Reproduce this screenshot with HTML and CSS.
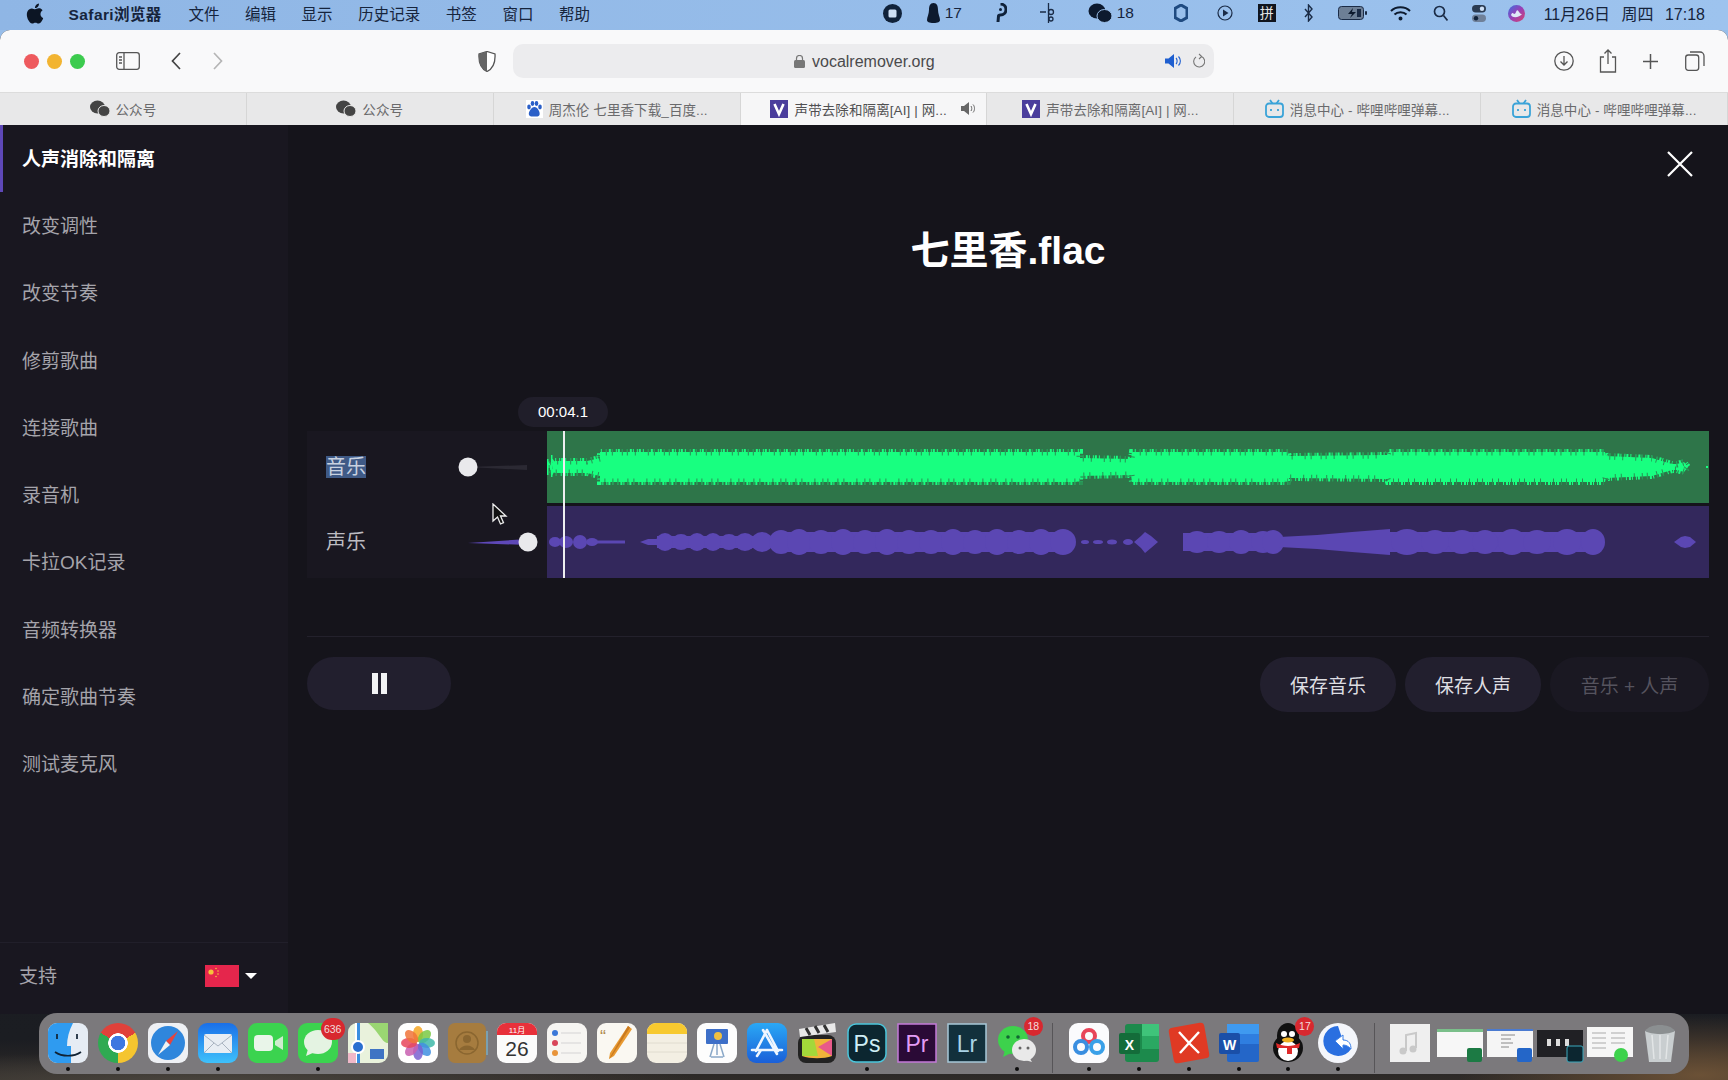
FILE: index.html
```html
<!DOCTYPE html>
<html lang="zh-CN">
<head>
<meta charset="utf-8">
<title>声带去除和隔离[AI] | 网上</title>
<link rel="stylesheet" href="styles.css">
</head>
<body>
<div class="screen">
  <header class="menubar">
    <nav class="menu">
      <svg class="apple" viewBox="0 0 24 24"><path d="M12.152 6.896c-.948 0-2.415-1.078-3.96-1.04-2.04.027-3.91 1.183-4.961 3.014-2.117 3.675-.546 9.103 1.519 12.09 1.013 1.454 2.208 3.09 3.792 3.039 1.52-.065 2.09-.987 3.935-.987 1.831 0 2.35.987 3.96.948 1.637-.026 2.676-1.48 3.676-2.948 1.156-1.688 1.636-3.325 1.662-3.415-.039-.013-3.182-1.221-3.22-4.857-.026-3.04 2.48-4.494 2.597-4.559-1.429-2.09-3.623-2.324-4.39-2.376-2-.156-3.675 1.09-4.61 1.09zM15.53 3.83c.843-1.012 1.4-2.427 1.245-3.83-1.207.052-2.662.805-3.532 1.818-.78.896-1.454 2.338-1.273 3.714 1.338.104 2.715-.688 3.559-1.701"/></svg>
      <b class="app-name">Safari浏览器</b>
      <span>文件</span><span>编辑</span><span>显示</span><span>历史记录</span><span>书签</span><span>窗口</span><span>帮助</span>
    </nav>
    <div class="status">
      <svg width="19" height="19" viewBox="0 0 19 19"><circle cx="9.5" cy="9.5" r="9.5" fill="#10223a"/><rect x="5.5" y="5.5" width="8" height="8" rx="1.5" fill="#cfe0f5"/></svg>
      <span class="st-pair"><svg width="13" height="20" viewBox="0 0 13 20"><path d="M6.5 0C10 0 11 3 11 7c0 4 2 7 2 10 0 2-2 3-6.5 3S0 19 0 17c0-3 2-6 2-10 0-4 1-7 4.5-7z" fill="#0d1a2e"/></svg><span>17</span></span>
      <svg width="13" height="20" viewBox="0 0 13 20"><path d="M6.5 1a5.5 5.5 0 0 1 0 11c-1 0-2 0-2 1l-.5 6" fill="none" stroke="#10223a" stroke-width="3"/><circle cx="6.5" cy="6.5" r="1.5" fill="#10223a"/></svg>
      <svg width="17" height="20" viewBox="0 0 17 20" fill="none" stroke="#1a2b46" stroke-width="1.3"><path d="M8.5 0v20M0 9h6"/><circle cx="11" cy="9" r="2.5"/><circle cx="11" cy="16" r="2"/></svg>
      <span class="st-pair"><svg width="24" height="20" viewBox="0 0 24 20" fill="#0d1a2e"><ellipse cx="9" cy="8" rx="8.5" ry="7.5"/><ellipse cx="16.5" cy="13" rx="7.5" ry="6.5" stroke="#9cc0ea"/></svg><span>18</span></span>
      <svg width="14" height="18" viewBox="0 0 14 18"><path d="M7 1l6 3.5v9L7 17l-6-3.5v-9z" fill="none" stroke="#1f4a80" stroke-width="3"/></svg>
      <svg width="16" height="16" viewBox="0 0 16 16"><circle cx="8" cy="8" r="7" fill="none" stroke="#1a2b46" stroke-width="1.2"/><path d="M6 4.5l5.5 3.5L6 11.5z" fill="#1a2b46"/></svg>
      <span class="pin">拼</span>
      <svg width="9" height="18" viewBox="0 0 9 18"><path d="M1 5l7 8-3.5 4V1L8 5l-7 8" fill="none" stroke="#1a2b46" stroke-width="1.4"/></svg>
      <svg width="30" height="14" viewBox="0 0 30 14"><rect x=".5" y=".5" width="25" height="13" rx="3" fill="#6d7f96" stroke="#1a2b46"/><path d="M15 2l-5 6h4l-2 4 6-6h-4z" fill="#0d1a2e"/><rect x="19" y="3" width="4" height="8" fill="#1a2b46"/><rect x="27" y="5" width="2" height="4" rx="1" fill="#1a2b46"/></svg>
      <svg width="21" height="15" viewBox="0 0 21 15" fill="none" stroke="#0d1a2e" stroke-width="2"><path d="M1 5c5-5 14-5 19 0M4.5 8.5c3-3 9-3 12 0"/><circle cx="10.5" cy="12.5" r="1" fill="#0d1a2e"/></svg>
      <svg width="15" height="16" viewBox="0 0 15 16" fill="none" stroke="#1a2b46" stroke-width="1.7"><circle cx="6.5" cy="6.5" r="5"/><path d="M10.5 10.5l4 5"/></svg>
      <svg width="14" height="17" viewBox="0 0 14 17"><rect width="14" height="7.5" rx="3.7" fill="#2b3b52"/><circle cx="10" cy="3.7" r="2.2" fill="#cfe0f5"/><rect y="9.5" width="14" height="7.5" rx="3.7" fill="#6f8099"/><circle cx="4" cy="13.2" r="2.2" fill="#10223a"/></svg>
      <svg width="17" height="17" viewBox="0 0 17 17"><defs><linearGradient id="siri" x1="0" y1="0" x2="1" y2="1"><stop offset="0" stop-color="#3b6fe0"/><stop offset=".5" stop-color="#9a3fb5"/><stop offset="1" stop-color="#d8446a"/></linearGradient></defs><circle cx="8.5" cy="8.5" r="8.5" fill="url(#siri)"/><path d="M3 10c2-5 3 2 5-3s3 3 6 2c-2 3-9 5-11 1z" fill="#dfe7f7"/></svg>
      <span class="clock">11月26日 周四 17:18</span>
    </div>
  </header>

  <div class="window">
    <div class="toolbar">
      <div class="traffic"><i class="red"></i><i class="amber"></i><i class="green"></i></div>
      <svg class="tb-sidebar" width="24" height="18" viewBox="0 0 24 18" fill="none" stroke="#555" stroke-width="1.3"><rect x=".7" y=".7" width="22.6" height="16.6" rx="2.5"/><path d="M8 1v16M3 5h3M3 8h3M3 11h3"/></svg>
      <svg class="tb-back" width="10" height="18" viewBox="0 0 10 18" fill="none" stroke="#444" stroke-width="1.7"><path d="M9 1L1.5 9 9 17"/></svg>
      <svg class="tb-forward" width="10" height="18" viewBox="0 0 10 18" fill="none" stroke="#b5b5b5" stroke-width="1.7"><path d="M1 1l7.5 8L1 17"/></svg>
      <svg class="tb-shield" width="18" height="21" viewBox="0 0 18 21"><path d="M9 .5l8 2.5c.5 8-1 14-8 17.5C2 17 .5 11 1 3z" fill="#fff" stroke="#555" stroke-width="1.3"/><path d="M9 .5L1 3c-.5 8 1 14 8 17.5z" fill="#666"/></svg>
      <div class="address">
        <svg width="11" height="13" viewBox="0 0 11 13"><rect y="5" width="11" height="8" rx="1.5" fill="#777"/><path d="M2.5 5V3.5a3 3 0 0 1 6 0V5" fill="none" stroke="#777" stroke-width="1.2"/></svg>
        <span class="url">vocalremover.org</span>
        <svg class="addr-speaker" width="17" height="14" viewBox="0 0 17 14"><path d="M0 4.5h3.5L9 0v14L3.5 9.5H0z" fill="#1f5fd0"/><path d="M11 4c1.5 1.5 1.5 4.5 0 6M13.5 2.5c2.5 2.5 2.5 6.5 0 9" fill="none" stroke="#1f5fd0" stroke-width="1.1"/></svg>
        <svg class="addr-reload" width="13" height="16" viewBox="0 0 13 16" fill="none" stroke="#777" stroke-width="1.1"><path d="M9.5 3.5A5.5 5.5 0 1 1 4 4M7 1l2.7 2.5L7 6"/></svg>
      </div>
      <div class="tb-right">
        <svg width="20" height="20" viewBox="0 0 20 20" fill="none" stroke="#555" stroke-width="1.3"><circle cx="10" cy="10" r="9.2"/><path d="M10 5v9M6.5 10.5L10 14l3.5-3.5"/></svg>
        <svg width="18" height="24" viewBox="0 0 18 24" fill="none" stroke="#555" stroke-width="1.3"><path d="M5 8H1.5v15h15V8H13M9 15V1M5.5 4.5L9 1l3.5 3.5"/></svg>
        <svg width="15" height="15" viewBox="0 0 15 15" fill="none" stroke="#555" stroke-width="1.5"><path d="M7.5 0v15M0 7.5h15"/></svg>
        <svg width="20" height="20" viewBox="0 0 20 20" fill="none" stroke="#555" stroke-width="1.3"><rect x=".7" y="4" width="13" height="15.3" rx="2.5"/><path d="M5 1h10a4 4 0 0 1 4 4v10"/></svg>
      </div>
    </div>

    <div class="tabs">
      <div class="tab"><svg class="fav" width="20" height="17" viewBox="0 0 20 17" fill="#444"><ellipse cx="7.5" cy="7" rx="7.5" ry="6.5"/><ellipse cx="14" cy="11" rx="6" ry="5.5" stroke="#e8e8e8"/></svg><span>公众号</span></div>
      <div class="tab"><svg class="fav" width="20" height="17" viewBox="0 0 20 17" fill="#444"><ellipse cx="7.5" cy="7" rx="7.5" ry="6.5"/><ellipse cx="14" cy="11" rx="6" ry="5.5" stroke="#e8e8e8"/></svg><span>公众号</span></div>
      <div class="tab"><svg class="fav" width="17" height="18" viewBox="0 0 17 18"><rect width="17" height="18" fill="#fff"/><g fill="#2a5fc8"><ellipse cx="3" cy="7" rx="1.8" ry="2.4"/><ellipse cx="6.5" cy="3.5" rx="1.8" ry="2.4"/><ellipse cx="10.5" cy="3.5" rx="1.8" ry="2.4"/><ellipse cx="14" cy="7" rx="1.8" ry="2.4"/><path d="M8.5 7c3 0 6 5 5 8-1 2-3 1.5-5 1.5S4 17 3 15C2 12 5.5 7 8.5 7z"/></g></svg><span>周杰伦 七里香下载_百度...</span></div>
      <div class="tab active"><svg class="fav" width="18" height="18" viewBox="0 0 18 18"><rect width="18" height="18" fill="#4a3d9c"/><path d="M4.5 4L9 14l4.5-10" fill="none" stroke="#fff" stroke-width="2.6"/></svg><span>声带去除和隔离[AI] | 网...</span><svg class="tab-speaker" width="15" height="13" viewBox="0 0 15 13"><path d="M0 4h3l5-4v13l-5-4H0z" fill="#666"/><path d="M10 4c1 1.5 1 3.5 0 5M12 2.5c2 2 2 6 0 8" fill="none" stroke="#666"/></svg></div>
      <div class="tab"><svg class="fav" width="18" height="18" viewBox="0 0 18 18"><rect width="18" height="18" fill="#4a3d9c"/><path d="M4.5 4L9 14l4.5-10" fill="none" stroke="#fff" stroke-width="2.6"/></svg><span>声带去除和隔离[AI] | 网...</span></div>
      <div class="tab"><svg class="fav" width="19" height="19" viewBox="0 0 19 19" fill="none" stroke="#3aa3d8" stroke-width="1.8"><rect x="1" y="4.5" width="17" height="13.5" rx="3"/><path d="M5 1l2.5 3.5M14 1l-2.5 3.5M6 10v2M13 10v2"/></svg><span>消息中心 - 哔哩哔哩弹幕...</span></div>
      <div class="tab"><svg class="fav" width="19" height="19" viewBox="0 0 19 19" fill="none" stroke="#3aa3d8" stroke-width="1.8"><rect x="1" y="4.5" width="17" height="13.5" rx="3"/><path d="M5 1l2.5 3.5M14 1l-2.5 3.5M6 10v2M13 10v2"/></svg><span>消息中心 - 哔哩哔哩弹幕...</span></div>
    </div>

    <div class="app">
      <aside class="sidebar">
        <ul class="side-list">
          <li class="current">人声消除和隔离</li>
          <li>改变调性</li>
          <li>改变节奏</li>
          <li>修剪歌曲</li>
          <li>连接歌曲</li>
          <li>录音机</li>
          <li>卡拉OK记录</li>
          <li>音频转换器</li>
          <li>确定歌曲节奏</li>
          <li>测试麦克风</li>
        </ul>
        <div class="side-foot">
          <span>支持</span>
          <span class="lang">
            <svg width="34" height="22" viewBox="0 0 34 22"><rect width="34" height="22" fill="#e5264c"/><circle cx="6" cy="7" r="2.6" fill="#f5c33b"/><g fill="#f5c33b"><circle cx="11" cy="3.5" r=".8"/><circle cx="13" cy="6" r=".8"/><circle cx="13" cy="9" r=".8"/><circle cx="11" cy="11.5" r=".8"/></g></svg>
            <i class="caret"></i>
          </span>
        </div>
      </aside>

      <main class="editor">
        <svg class="close" width="26" height="26" viewBox="0 0 26 26" fill="none" stroke="#fff" stroke-width="2.2"><path d="M1 1l24 24M25 1L1 25"/></svg>
        <h1 class="title">七里香.flac</h1>

        <section class="mixer">
          <div class="channels">
            <div class="channel">
              <span class="ch-name selected">音乐</span>
              <svg class="slider" width="80" height="20" viewBox="0 0 80 20"><path d="M10 10l59-2v5z" fill="#2b2933"/><circle cx="10" cy="10" r="9.5" fill="#e9e9ec"/></svg>
            </div>
            <div class="channel">
              <span class="ch-name">声乐</span>
              <svg class="slider" width="80" height="20" viewBox="0 0 80 20"><path d="M10 11l60-4v6z" fill="#5e48b8"/><circle cx="70" cy="10" r="9.5" fill="#e9e9ec"/></svg>
            </div>
            <svg class="cursor" width="16" height="23" viewBox="0 0 16 23"><path d="M1 1v17l4.5-4 3 7 3-1.3-3-6.7H14z" fill="#111" stroke="#eee" stroke-width="1.3"/></svg>
          </div>
          <div class="waves">
            <div class="wave wave-music">
              <svg viewBox="0 0 1162 72">
                <defs><path id="music-env" d="M3 33L8 30L40 30L53 27L53 21L533 21L533 27L584 28L585 21L741 21L742 25L840 24L841 21L1058 21L1059 25L1105 27L1125 33L1130 33L1137 31L1141 36L1137 41L1130 39L1125 39L1105 45L1059 47L1058 51L841 51L840 48L742 47L741 51L585 51L584 44L533 45L533 51L53 51L53 45L40 42L8 42L3 39Z"/></defs>
                <use href="#music-env" class="wm-teeth"/>
                <use href="#music-env" class="wm-body"/>
                <use href="#music-env" class="wm-notch"/>
                <rect class="wm-spike" x="0" y="28" width="1.5" height="16"/>
                <rect class="wm-spike" x="4" y="24" width="1.5" height="22"/>
                <rect class="wm-spike" x="1159" y="35" width="2" height="2"/>
              </svg>
            </div>
            <div class="wave wave-voice">
              <svg viewBox="0 0 1162 72">
                <g class="wv-fill">
                  <ellipse cx="8" cy="36" rx="6" ry="5"/><ellipse cx="19" cy="36" rx="7" ry="6"/><ellipse cx="33" cy="36" rx="7" ry="7"/><ellipse cx="45" cy="36" rx="6" ry="4"/><path d="M50 34.5h28v3H50z"/>
                  <path d="M93 36l8-3h9v6h-9z"/>
                  <rect x="110" y="30" width="100" height="12"/>
                  <ellipse cx="118" cy="36" rx="9" ry="9"/><ellipse cx="134" cy="36" rx="9" ry="8"/><ellipse cx="150" cy="36" rx="9" ry="9"/><ellipse cx="166" cy="36" rx="9" ry="9"/><ellipse cx="182" cy="36" rx="9" ry="8"/><ellipse cx="198" cy="36" rx="10" ry="9"/>
                  <ellipse cx="215" cy="36" rx="11" ry="10"/><ellipse cx="234" cy="36" rx="12" ry="12"/>
                  <rect x="240" y="26" width="282" height="20"/>
                  <ellipse cx="252" cy="36" rx="12" ry="13"/><ellipse cx="274" cy="36" rx="12" ry="12"/><ellipse cx="296" cy="36" rx="12" ry="13"/><ellipse cx="318" cy="36" rx="12" ry="12"/><ellipse cx="340" cy="36" rx="12" ry="13"/><ellipse cx="362" cy="36" rx="12" ry="12"/><ellipse cx="384" cy="36" rx="12" ry="12"/><ellipse cx="406" cy="36" rx="12" ry="13"/><ellipse cx="428" cy="36" rx="12" ry="12"/><ellipse cx="450" cy="36" rx="12" ry="13"/><ellipse cx="472" cy="36" rx="12" ry="12"/><ellipse cx="494" cy="36" rx="12" ry="13"/><ellipse cx="516" cy="36" rx="13" ry="13"/>
                  <ellipse cx="538" cy="36" rx="4" ry="2"/><ellipse cx="551" cy="36" rx="5" ry="2"/><ellipse cx="565" cy="36" rx="5" ry="2.5"/><ellipse cx="581" cy="36" rx="5" ry="3"/>
                  <path d="M587 36L594 30L598 26L604 30L611 36L604 42L598 47L594 42Z"/>
                  <rect x="636" y="27" width="90" height="18"/>
                  <ellipse cx="650" cy="36" rx="12" ry="11"/><ellipse cx="672" cy="36" rx="12" ry="11"/><ellipse cx="694" cy="36" rx="12" ry="12"/><ellipse cx="716" cy="36" rx="12" ry="11"/><ellipse cx="726" cy="36" rx="11" ry="12"/>
                  <path d="M732 31L770 29L805 26L843 23V49L805 46L770 43L732 41Z"/>
                  <rect x="843" y="26" width="205" height="20"/>
                  <ellipse cx="860" cy="36" rx="16" ry="13"/><ellipse cx="888" cy="36" rx="14" ry="12"/><ellipse cx="915" cy="36" rx="14" ry="12"/><ellipse cx="938" cy="36" rx="13" ry="12"/><ellipse cx="965" cy="36" rx="14" ry="13"/><ellipse cx="990" cy="36" rx="14" ry="12"/><ellipse cx="1020" cy="36" rx="14" ry="13"/><ellipse cx="1046" cy="36" rx="12" ry="13"/>
                  <path d="M1127 36L1134 31L1138 30L1143 31L1149 36L1143 41L1138 42L1134 41Z"/>
                </g>
              </svg>
            </div>
            <i class="playhead"></i>
            <span class="timecode">00:04.1</span>
          </div>
        </section>

        <hr class="rule">

        <div class="actions">
          <button class="btn play" aria-label="暂停"><i></i><i></i></button>
          <div class="saves">
            <button class="btn">保存音乐</button>
            <button class="btn">保存人声</button>
            <button class="btn off">音乐 + 人声</button>
          </div>
        </div>
      </main>
    </div>
  </div>

  <footer class="dock">
    <div class="di run"><svg viewBox="0 0 40 40"><rect width="40" height="40" rx="9" fill="#e6ecf4"/><path d="M9 0h16c-4 8-6 15-6 23h4v17H9a9 9 0 0 1-9-9V9a9 9 0 0 1 9-9z" fill="#2f9bf0"/><path d="M9 11v5M29 11v5M7 29c7 5 19 5 26 0" fill="none" stroke="#123" stroke-width="1.7"/></svg></div>
    <div class="di run"><span class="chrome"></span></div>
    <div class="di run"><svg viewBox="0 0 40 40"><rect width="40" height="40" rx="9" fill="#eef0f4"/><circle cx="20" cy="20" r="17" fill="#2f86dc"/><path d="M30 8L22 22 18 18z" fill="#e8433c"/><path d="M10 32l8-14 4 4z" fill="#f2f2f2"/></svg></div>
    <div class="di run"><svg viewBox="0 0 40 40"><defs><linearGradient id="mail" x1="0" y1="0" x2="0" y2="1"><stop offset="0" stop-color="#1a6fe8"/><stop offset="1" stop-color="#3fc1fb"/></linearGradient></defs><rect width="40" height="40" rx="9" fill="url(#mail)"/><rect x="6" y="11" width="28" height="19" rx="2" fill="#e8edf3"/><path d="M6 12l14 11 14-11M6 30l10-10M34 30L24 20" fill="none" stroke="#a9b3c0"/></svg></div>
    <div class="di"><svg viewBox="0 0 40 40"><rect width="40" height="40" rx="9" fill="#3bd34f"/><rect x="6" y="12" width="19" height="16" rx="4" fill="#e9f5e9"/><path d="M27 18l8-5v14l-8-5z" fill="#cfeccf"/></svg></div>
    <div class="di run"><svg viewBox="0 0 40 40"><rect width="40" height="40" rx="9" fill="#3bd34f"/><ellipse cx="20" cy="19" rx="14" ry="12" fill="#e4f3e2"/><path d="M10 26l-2 7 9-4z" fill="#e4f3e2"/></svg><b class="badge wide">636</b></div>
    <div class="di"><svg viewBox="0 0 40 40"><rect width="40" height="40" rx="9" fill="#e9f2dc"/><path d="M20 0h20v20c-6 0-8-10-20-20z" fill="#9ad672"/><rect x="7" y="0" width="5" height="40" fill="#fff"/><path d="M9 0h3v40H9z" fill="#3a8ee0"/><circle cx="10" cy="24" r="6" fill="#2a6fd0" stroke="#fff" stroke-width="2"/><path d="M22 26h14v10H22z" fill="#3f74c4"/><path d="M0 30h8v10H0z" fill="#f0b8c8"/></svg></div>
    <div class="di"><svg viewBox="0 0 40 40"><rect width="40" height="40" rx="9" fill="#fff"/><g transform="translate(20 20)"><ellipse cy="-9" rx="5" ry="8" fill="#f5a623" opacity=".85"/><ellipse cy="-9" rx="5" ry="8" fill="#7ac943" opacity=".85" transform="rotate(45)"/><ellipse cy="-9" rx="5" ry="8" fill="#3fb8a8" opacity=".85" transform="rotate(90)"/><ellipse cy="-9" rx="5" ry="8" fill="#3f8fe0" opacity=".85" transform="rotate(135)"/><ellipse cy="-9" rx="5" ry="8" fill="#7a5fd0" opacity=".85" transform="rotate(180)"/><ellipse cy="-9" rx="5" ry="8" fill="#c85fb0" opacity=".85" transform="rotate(225)"/><ellipse cy="-9" rx="5" ry="8" fill="#e8455a" opacity=".85" transform="rotate(270)"/><ellipse cy="-9" rx="5" ry="8" fill="#f0743a" opacity=".85" transform="rotate(315)"/></g></svg></div>
    <div class="di"><svg viewBox="0 0 40 40"><rect width="38" height="40" rx="7" fill="#a67c3f"/><circle cx="19" cy="20" r="11" fill="none" stroke="#8a6630" stroke-width="1.5"/><circle cx="19" cy="16" r="4" fill="#8a6630"/><path d="M11 27c3-6 13-6 16 0" fill="#8a6630"/><rect x="38" y="8" width="2" height="24" fill="#7aa0b0"/></svg></div>
    <div class="di"><svg viewBox="0 0 40 40"><rect width="40" height="40" rx="9" fill="#fbfbfb"/><path d="M0 12V9a9 9 0 0 1 9-9h22a9 9 0 0 1 9 9v3z" fill="#e8303a"/><text class="ic-cal-m" x="20" y="9.5">11月</text><text class="ic-cal-d" x="20" y="33">26</text></svg></div>
    <div class="di"><svg viewBox="0 0 40 40"><rect width="40" height="40" rx="9" fill="#f6f5f2"/><circle cx="8" cy="10" r="3" fill="#3a78d8"/><circle cx="8" cy="20" r="3" fill="#d8455a"/><circle cx="8" cy="30" r="3" fill="#e8943a"/><path d="M14 10h20M14 20h20M14 30h20" stroke="#d4d4d4" stroke-width="1.2"/></svg></div>
    <div class="di"><svg viewBox="0 0 40 40"><rect width="40" height="40" rx="9" fill="#faf8f2"/><path d="M31 3l4 3-18 27-5 3 1-6z" fill="#e89a32"/><path d="M31 3l2 1.5L15 33l-3 3z" fill="#c97a20"/><text class="ic-quote" x="3" y="20">“</text></svg></div>
    <div class="di"><svg viewBox="0 0 40 40"><rect width="40" height="40" rx="9" fill="#f3efe3"/><path d="M0 11V9a9 9 0 0 1 9-9h22a9 9 0 0 1 9 9v2z" fill="#f7c92f"/><path d="M0 20h40M0 29h40" stroke="#e0dccf"/></svg></div>
    <div class="di"><svg viewBox="0 0 40 40"><rect width="40" height="40" rx="9" fill="#fdfdfd"/><rect x="9" y="6" width="22" height="15" rx="1" fill="#3d6fc8"/><circle cx="21" cy="13" r="4" fill="#f0c040"/><path d="M20 21v11M14 34h12M17 21l-4 13M23 21l4 13" stroke="#8aa8c8" stroke-width="1.5" fill="none"/></svg></div>
    <div class="di"><svg viewBox="0 0 40 40"><defs><linearGradient id="store" x1="0" y1="0" x2="0" y2="1"><stop offset="0" stop-color="#2aa8f5"/><stop offset="1" stop-color="#1a5fd8"/></linearGradient></defs><rect width="40" height="40" rx="9" fill="url(#store)"/><path d="M20 7L9 28M20 7l11 21M16 7l14 24M5 27h30M10 33l4-6" stroke="#eef6ff" stroke-width="2.6" stroke-linecap="round" fill="none"/></svg></div>
    <div class="di"><svg viewBox="0 0 40 40"><rect x="1" y="12" width="38" height="28" rx="8" fill="#222"/><path d="M2 6l36-6 1 9-36 5z" fill="#e8e8e8"/><path d="M9 5l4 7M18 3l4 7M27 2l4 7" stroke="#333" stroke-width="3"/><path d="M5 16h30v17c-8 3-22 3-30 0z" fill="#f0b43a"/><path d="M5 16h12l4 17H5z" fill="#a3d83a"/><path d="M21 24l14-8v17z" fill="#e85a8a"/></svg></div>
    <div class="di run"><svg viewBox="0 0 40 40"><rect x="1" y="1" width="38" height="38" rx="8" fill="#0c2630" stroke="#4ac6dc" stroke-width="1.5"/><text class="ic-adobe ps" x="20" y="29">Ps</text></svg></div>
    <div class="di"><svg viewBox="0 0 40 40"><rect x="1" y="1" width="38" height="38" fill="#2a0a36" stroke="#c47ad8" stroke-width="1.5"/><text class="ic-adobe pr" x="20" y="29">Pr</text></svg></div>
    <div class="di"><svg viewBox="0 0 40 40"><rect x="1" y="1" width="38" height="38" fill="#12303c" stroke="#a8c8d8" stroke-width="1.5"/><text class="ic-adobe lr" x="20" y="29">Lr</text></svg></div>
    <div class="di run"><svg viewBox="0 0 40 40"><ellipse cx="16" cy="17" rx="15" ry="14" fill="#3dd24c"/><path d="M8 27l-2 7 8-4z" fill="#3dd24c"/><circle cx="11" cy="14" r="1.8" fill="#163"/><circle cx="21" cy="14" r="1.8" fill="#163"/><ellipse cx="27" cy="27" rx="12" ry="11" fill="#e9e9e9"/><path d="M32 34l3 5-7-2z" fill="#e9e9e9"/><circle cx="23" cy="25" r="1.5" fill="#666"/><circle cx="31" cy="25" r="1.5" fill="#666"/></svg><b class="badge">18</b></div>
    <i class="dock-sep"></i>
    <div class="di run"><svg viewBox="0 0 40 40"><rect width="40" height="40" rx="9" fill="#fbfbfd"/><g fill="none" stroke-width="4"><circle cx="20" cy="13" r="6" stroke="#e8455a"/><circle cx="12" cy="24" r="6" stroke="#3a8ee0"/><circle cx="28" cy="24" r="6" stroke="#3aa0e8"/></g></svg></div>
    <div class="di run"><svg viewBox="0 0 40 40"><rect x="6" y="1" width="34" height="38" rx="3" fill="#1c8a4c"/><rect x="23" y="1" width="17" height="12" fill="#3fc47a"/><rect x="23" y="13" width="17" height="13" fill="#2aa862"/><rect y="10" width="21" height="21" rx="2" fill="#146c3a"/><text class="ic-office" x="10.5" y="27">X</text></svg></div>
    <div class="di run"><svg viewBox="0 0 40 40"><rect x="2" y="2" width="36" height="36" rx="4" fill="#e03a24" transform="rotate(-10 20 20)"/><path d="M10 9l10 11-9 10M30 9L20 20l10 10" stroke="#fff" stroke-width="2.4" fill="none"/></svg></div>
    <div class="di run"><svg viewBox="0 0 40 40"><rect x="8" y="1" width="32" height="38" rx="2" fill="#2466c8"/><rect x="8" y="1" width="32" height="10" fill="#3f9af0"/><rect x="8" y="11" width="32" height="10" fill="#2f7ee0"/><rect y="10" width="21" height="21" rx="2" fill="#1a4fa8"/><text class="ic-office" x="10.5" y="27">W</text></svg></div>
    <div class="di run"><svg viewBox="0 0 40 40"><ellipse cx="20" cy="25" rx="15" ry="14" fill="#111"/><ellipse cx="20" cy="13" rx="11" ry="13" fill="#111"/><ellipse cx="20" cy="28" rx="10" ry="10" fill="#fff"/><circle cx="16" cy="11" r="3" fill="#fff"/><circle cx="24" cy="11" r="3" fill="#fff"/><ellipse cx="20" cy="17" rx="6" ry="2.5" fill="#f0b020"/><path d="M8 20c8 4 16 4 24 0l-1 5H24v6h-5v-6H9z" fill="#e02a2a"/></svg><b class="badge">17</b></div>
    <div class="di run"><svg viewBox="0 0 40 40"><circle cx="20" cy="20" r="20" fill="#f4f6fb"/><path d="M20 3a15 15 0 1 0 13 23L24 15z" fill="#2a6fe0"/><path d="M17 18l8-6v5c6 0 8 4 8 9-3-3-5-4-8-4v4z" fill="#fff" stroke="#3a7fe8"/></svg></div>
    <i class="dock-sep"></i>
    <div class="di"><svg viewBox="0 0 40 40"><rect y="1" width="40" height="38" fill="#efefef"/><path d="M16 28V12l10-2v15" fill="none" stroke="#c9c9c9" stroke-width="2"/><circle cx="13" cy="28" r="3.5" fill="#c9c9c9"/><circle cx="23" cy="26" r="3.5" fill="#c9c9c9"/></svg></div>
    <div class="di"><svg viewBox="0 0 40 40"><rect x="-3" y="6" width="46" height="28" fill="#f7f7f7"/><rect x="-3" y="6" width="46" height="3" fill="#7abf8a"/><rect x="27" y="25" width="15" height="14" rx="2" fill="#1c7a44"/></svg></div>
    <div class="di"><svg viewBox="0 0 40 40"><rect x="-3" y="6" width="46" height="28" fill="#f5f5f5"/><rect x="-3" y="6" width="46" height="2" fill="#4a7ad0"/><path d="M11 12h14M11 16h10M11 20h12M11 24h8" stroke="#888"/><rect x="27" y="25" width="15" height="14" rx="2" fill="#2466c8"/></svg></div>
    <div class="di"><svg viewBox="0 0 40 40"><rect x="-3" y="7" width="46" height="27" fill="#202024"/><path d="M7 16h4v7H7zM16 16h4v7h-4zM25 16h4v7h-4z" fill="#ddd"/><rect x="27" y="23" width="16" height="16" rx="2" fill="#0c2630" stroke="#3aa8bc"/></svg></div>
    <div class="di"><svg viewBox="0 0 40 40"><rect x="-3" y="4" width="46" height="30" fill="#f6f6f6"/><path d="M2 10h14M2 15h14M2 20h14M2 25h14M21 10h14M21 15h14M21 20h14" stroke="#aaa"/><circle cx="31" cy="32" r="7" fill="#3dd24c"/></svg></div>
    <div class="di"><svg viewBox="0 0 40 40"><path d="M5 8h30l-4 31H9z" fill="#c9ced0"/><path d="M5 8c5-8 25-8 30 0-6 4-24 4-30 0z" fill="#8b8f91"/><path d="M12 12l2 24M20 12v24M28 12l-2 24" stroke="#e2e5e6" stroke-width="1.5"/></svg></div>
  </footer>
</div>
</body>
</html>
```

FILE: styles.css
```css
* { box-sizing: border-box; }
html, body { margin: 0; height: 100%; }
body {
  width: 1728px;
  height: 1080px;
  overflow: hidden;
  font-family: "Liberation Sans", "Noto Sans CJK SC", sans-serif;
}
.screen {
  position: relative;
  width: 1728px;
  height: 1080px;
  overflow: hidden;
  display: flex;
  flex-direction: column;
  background:
    radial-gradient(240px 60px at 1700px 1075px, #6b5136, transparent),
    radial-gradient(500px 30px at 200px 1082px, #4a453e, transparent),
    linear-gradient(to bottom, #97bde9 0, #97bde9 60px, #17161b 60px, #1b1d22 1040px, #2f2b28 1080px);
}

/* menu bar */
.menubar {
  height: 30px;
  flex: none;
  display: flex;
  align-items: center;
  justify-content: space-between;
  padding: 0 23px 4px 25px;
  background: linear-gradient(to right, #8fb6e5, #9dc3ee);
  color: #16243c;
  font-size: 15.5px;
}
.menu { display: flex; align-items: center; gap: 25.6px; }
.apple { width: 20px; height: 21px; fill: #0c1524; margin-right: -2px; }
.app-name { font-weight: 700; margin-right: 1px; letter-spacing: .4px; }
.status {
  display: grid;
  grid-template-columns: 44px 67px 46px 48px 86px 43px 41px 46px 34px 52px 43px 39px 36px 36px auto;
  align-items: center;
  justify-items: start;
  font-size: 15.5px;
}
.st-pair { display: flex; align-items: center; gap: 5px; }
.pin {
  width: 18px;
  height: 18px;
  background: #10151f;
  color: #e6e6e6;
  font-size: 14px;
  line-height: 18px;
  text-align: center;
}
.clock { font-size: 16px; word-spacing: 7px; white-space: nowrap; }

/* window */
.window {
  height: 984px;
  flex: none;
  display: flex;
  flex-direction: column;
  border-radius: 10px 10px 0 0;
  overflow: hidden;
  background: #15141b;
}
.toolbar {
  height: 62px;
  flex: none;
  display: flex;
  align-items: center;
  background: #f9f9fa;
}
.traffic { display: flex; gap: 8px; margin-left: 24px; }
.traffic i { width: 15px; height: 15px; border-radius: 50%; }
.red { background: #ee5a5e; }
.amber { background: #f2b431; }
.green { background: #3ccb4e; }
.tb-sidebar { margin-left: 31px; }
.tb-back { margin-left: 31px; }
.tb-forward { margin-left: 32px; }
.tb-shield { margin-left: 255px; }
.address {
  width: 701px;
  height: 34px;
  margin-left: 17px;
  border-radius: 10px;
  background: #ececee;
  display: flex;
  align-items: center;
  padding-left: 281px;
  color: #4a4a4c;
}
.url { margin-left: 7px; font-size: 16px; position: relative; top: 1px; }
.addr-speaker { margin-left: 230px; }
.addr-reload { margin-left: 10px; }
.tb-right {
  margin-left: 340px;
  display: grid;
  grid-template-columns: 45px 44px 42px 20px;
  align-items: center;
  justify-items: start;
}
.tabs {
  height: 33px;
  flex: none;
  display: grid;
  grid-template-columns: repeat(7, 1fr);
  background: #e8e8e9;
  border-top: 1px solid #dcdcdc;
  color: #6a6a6c;
  font-size: 13.5px;
  letter-spacing: .1px;
}
.tab {
  min-width: 0;
  display: flex;
  align-items: center;
  justify-content: center;
  gap: 6px;
  padding-bottom: 1px;
  border-right: 1px solid #d6d6d6;
  white-space: nowrap;
}
.tab.active {
  justify-content: flex-start;
  padding-left: 29px;
  gap: 7px;
  background: #f6f6f7;
  color: #505052;
}
.tab-speaker { margin-left: 7px; }
.fav { flex: none; }

/* app */
.app {
  flex: 1;
  min-height: 0;
  display: flex;
  background: #15141b;
}
.sidebar {
  width: 288px;
  flex: none;
  display: flex;
  flex-direction: column;
  background: #191720;
}
.side-list { list-style: none; margin: 0; padding: 0; flex: 1; }
.side-list li {
  height: 67.3px;
  display: flex;
  align-items: center;
  padding: 0 0 3px 22px;
  font-size: 19px;
  color: #a5a4ab;
}
.side-list .current {
  color: #fff;
  font-weight: 700;
  box-shadow: inset 3px 0 0 #5e48b8;
}
.side-foot {
  height: 72px;
  flex: none;
  border-top: 1px solid #211f2a;
  display: flex;
  align-items: flex-start;
  justify-content: space-between;
  padding: 18px 31px 0 19px;
  font-size: 19px;
  color: #a5a4ab;
}
.lang { display: flex; align-items: center; gap: 6px; padding-top: 4px; }
.caret {
  width: 0;
  height: 0;
  border-left: 6px solid transparent;
  border-right: 6px solid transparent;
  border-top: 6px solid #fff;
}

.editor {
  flex: 1;
  position: relative;
  padding: 101px 19px 0 19px;
}
.close { position: absolute; top: 26px; right: 35px; }
.title {
  margin: 0;
  height: 50px;
  line-height: 50px;
  text-align: center;
  font-size: 39px;
  font-weight: 700;
  color: #fff;
}
.mixer { display: flex; margin-top: 155px; }
.channels {
  width: 240px;
  flex: none;
  position: relative;
  display: grid;
  grid-template-rows: 72px 72px;
  row-gap: 3px;
  background: #191720;
}
.channel {
  display: flex;
  align-items: center;
  justify-content: space-between;
  padding: 0 9px 0 19px;
}
.ch-name { font-size: 20px; line-height: 22px; color: #bdbcc2; }
.ch-name.selected { background: #3f5a86; color: #c9d2e0; }
.cursor { position: absolute; left: 185px; top: 72px; }
.waves {
  flex: 1;
  position: relative;
  display: grid;
  grid-template-rows: 72px 72px;
  row-gap: 3px;
}
.wave svg { display: block; width: 100%; height: 72px; }
.wave-music { background: #2e7549; }
.wave-voice { background: #33285c; }
.wm-body { fill: #18ff80; }
.wm-teeth {
  fill: none;
  stroke: #18ff80;
  stroke-width: 6;
  stroke-dasharray: 1 2 2 1 1 3 1 1 2 2 1 4;
}
.wm-notch {
  fill: none;
  stroke: #2e7549;
  stroke-width: 7;
  stroke-dasharray: 1 7 1 12 1 5 1 9 1 4;
  opacity: .8;
}
.wm-spike { fill: #18ff80; }
.wv-fill { fill: #5b47b3; }
.playhead {
  position: absolute;
  left: 16px;
  top: 0;
  bottom: 0;
  width: 2px;
  background: #eeeef0;
}
.timecode {
  position: absolute;
  left: 16px;
  bottom: calc(100% + 4px);
  transform: translateX(-50%);
  width: 90px;
  height: 30px;
  border-radius: 15px;
  background: #201e2a;
  color: #fff;
  font-size: 15px;
  line-height: 30px;
  text-align: center;
}
.rule {
  margin: 58px 0 0;
  border: 0;
  height: 1px;
  background: #23212c;
}
.actions {
  display: flex;
  justify-content: space-between;
  margin-top: 20px;
}
.saves { display: flex; gap: 9px; }
.btn {
  height: 55px;
  width: 136px;
  border: 0;
  border-radius: 27px;
  background: #221f2e;
  color: #dedee2;
  font: 400 19px "Liberation Sans", "Noto Sans CJK SC", sans-serif;
  padding: 0;
}
.btn.off { width: 159px; background: #1a1822; color: #55535e; }
.btn.play {
  width: 144px;
  height: 53px;
  display: flex;
  align-items: center;
  justify-content: center;
  gap: 3px;
}
.play i { width: 6px; height: 21px; background: #f2f2f4; }

/* dock */
.dock {
  position: absolute;
  left: 39px;
  top: 1013px;
  width: 1650px;
  height: 61px;
  padding: 10px 0 0 9px;
  display: flex;
  align-items: flex-start;
  gap: 9.95px;
  border-radius: 18px;
  background: #7b797c;
}
.di { position: relative; width: 40px; height: 40px; flex: none; }
.di > svg { display: block; width: 100%; height: 100%; overflow: visible; }
.run::after {
  content: "";
  position: absolute;
  left: 18px;
  top: 44px;
  width: 4px;
  height: 4px;
  border-radius: 50%;
  background: #0c0c0c;
}
.chrome {
  display: block;
  width: 40px;
  height: 40px;
  border-radius: 50%;
  background: radial-gradient(circle, #3d78e0 0 7px, #fff 7.5px 9.5px, transparent 10px),
    conic-gradient(from -60deg, #e0413a 0 120deg, #f5c52f 120deg 240deg, #2faa52 240deg 360deg);
}
.badge {
  position: absolute;
  top: -6px;
  right: -6px;
  min-width: 19px;
  height: 19px;
  border-radius: 10px;
  background: #d8282f;
  color: #f4dcdc;
  font-size: 10.5px;
  font-weight: 400;
  line-height: 19px;
  text-align: center;
}
.badge.wide { min-width: 24px; height: 22px; line-height: 22px; border-radius: 11px; right: -7px; top: -5px; }
.dock-sep { width: 1px; height: 50px; margin: 0 5.5px; background: #575558; flex: none; }
.ic-cal-m { font-size: 8px; fill: #fff; text-anchor: middle; }
.ic-cal-d { font-size: 21px; fill: #333; text-anchor: middle; }
.ic-quote { font-size: 18px; fill: #b08a50; }
.ic-adobe { font-size: 23px; text-anchor: middle; }
.ps { fill: #cfeef5; }
.pr { fill: #e39cf5; }
.lr { fill: #a9d3e6; }
.ic-office { font-size: 14px; font-weight: 700; fill: #fff; text-anchor: middle; }
```
